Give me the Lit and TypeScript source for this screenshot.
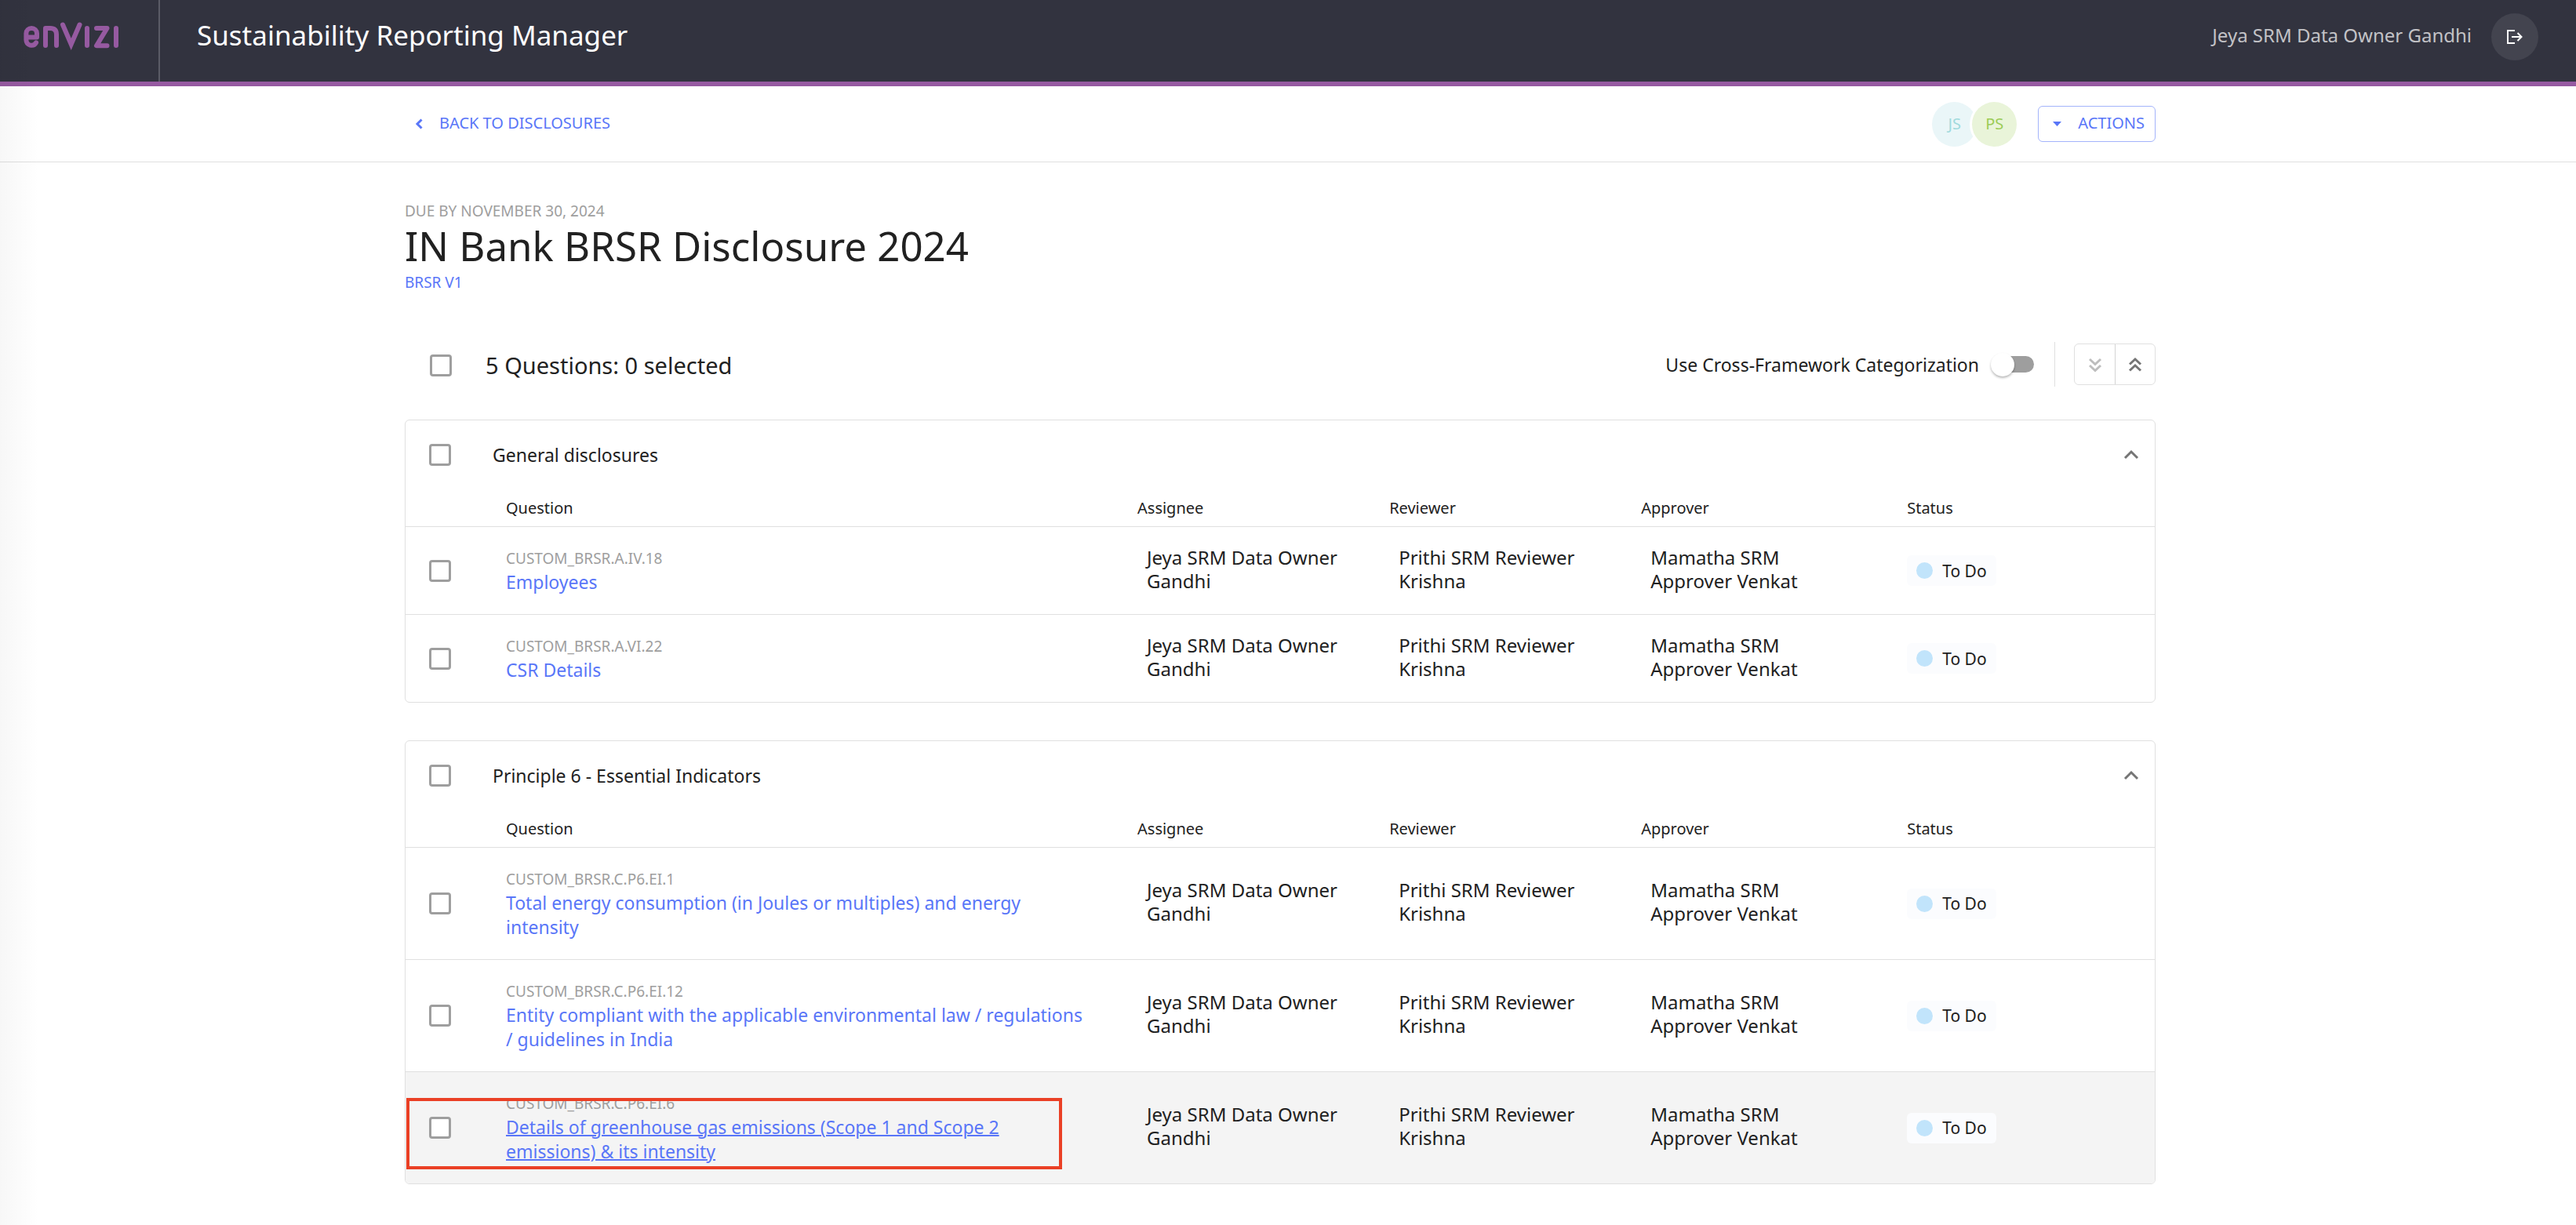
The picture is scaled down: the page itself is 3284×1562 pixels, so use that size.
import { LitElement, html, css, nothing } from "lit";
import { customElement, property } from "lit/decorators.js";

interface Question {
  code: string;
  title: string;
  active?: boolean;
}

interface Section {
  title: string;
  questions: Question[];
}

const SECTIONS: Section[] = [
  {
    title: "General disclosures",
    questions: [
      { code: "CUSTOM_BRSR.A.IV.18", title: "Employees" },
      { code: "CUSTOM_BRSR.A.VI.22", title: "CSR Details" },
    ],
  },
  {
    title: "Principle 6 - Essential Indicators",
    questions: [
      {
        code: "CUSTOM_BRSR.C.P6.EI.1",
        title: "Total energy consumption (in Joules or multiples) and energy intensity",
      },
      {
        code: "CUSTOM_BRSR.C.P6.EI.12",
        title: "Entity compliant with the applicable environmental law / regulations / guidelines in India",
      },
      {
        code: "CUSTOM_BRSR.C.P6.EI.6",
        title: "Details of greenhouse gas emissions (Scope 1 and Scope 2 emissions) & its intensity",
        active: true,
      },
    ],
  },
];

const shared = css`
  *,
  *::before,
  *::after {
    box-sizing: border-box;
  }
  button {
    font: inherit;
    color: inherit;
    margin: 0;
    padding: 0;
    border: 0;
    background: none;
    cursor: pointer;
  }
  a {
    color: #5976f8;
    text-decoration: none;
  }
  svg {
    display: block;
    fill: none;
    stroke: currentColor;
  }
  .check {
    appearance: none;
    display: block;
    flex: none;
    width: 28px;
    height: 28px;
    margin: 0;
    border: 3px solid #9e9e9e;
    border-radius: 4px;
    background: #fff;
  }
  .check:checked {
    background: #5976f8;
  }
`;

@customElement("question-section")
export class QuestionSection extends LitElement {
  @property({ attribute: false }) section!: Section;

  static styles = [
    shared,
    css`
      :host {
        display: block;
        border: 1px solid #e0e0e0;
        border-radius: 6px;
        overflow: hidden;
        background: #fff;
      }
      .head {
        display: flex;
        align-items: center;
        gap: 53px;
        height: 88px;
        padding: 0 18px 0 30px;
      }
      h2 {
        flex: 1;
        margin: 0;
        font-size: 23px;
        line-height: 30px;
        font-weight: 400;
      }
      .toggle {
        color: #757575;
      }
      table {
        width: 100%;
        table-layout: fixed;
        border-collapse: separate;
        border-spacing: 0;
      }
      .c-check {
        width: 128px;
      }
      .c-question {
        width: 36.1%;
      }
      .c-person {
        width: 14.4%;
      }
      .c-approver {
        width: 15.2%;
      }
      th {
        height: 48px;
        padding: 0;
        border-bottom: 1px solid #e0e0e0;
        font-size: 20px;
        line-height: 26px;
        font-weight: 400;
        text-align: left;
      }
      td {
        padding: 0;
        border-bottom: 1px solid #e0e0e0;
        vertical-align: middle;
      }
      tr:last-child td {
        border-bottom: 0;
      }
      .active td {
        background: #f4f4f4;
      }
      .active a {
        text-decoration: underline;
        text-decoration-thickness: 2px;
      }
      .pick {
        padding-left: 30px;
      }
      .question {
        position: relative;
        padding: 25px 60px 25px 0;
      }
      .code {
        display: block;
        color: #9e9e9e;
        font-size: 19px;
        line-height: 30px;
      }
      .question a {
        display: block;
        font-size: 23px;
        line-height: 31px;
      }
      .person {
        padding: 0 56px 4px 12px;
        font-size: 24px;
        line-height: 30px;
      }
      .status {
        display: inline-flex;
        align-items: center;
        gap: 12px;
        height: 39px;
        padding: 0 12px;
        border-radius: 6px;
        background: #fbfcfe;
        font-size: 21px;
        line-height: 26px;
        vertical-align: middle;
      }
      .dot {
        width: 21px;
        height: 21px;
        border-radius: 50%;
        background: #c1e4fb;
      }
      .marker {
        position: absolute;
        left: -127px;
        top: 33px;
        width: 836px;
        height: 91px;
        border: 4px solid #ea4025;
        pointer-events: none;
      }
    `,
  ];

  render() {
    const { title, questions } = this.section;
    return html`
      <div class="head">
        <input class="check" type="checkbox" aria-label="Select all in ${title}" />
        <h2>${title}</h2>
        <button class="toggle" aria-label="Collapse ${title}">
          <svg width="24" height="24" viewBox="0 0 24 24" stroke-width="3"><path d="M4 16l8-8 8 8" /></svg>
        </button>
      </div>
      <table>
        <colgroup>
          <col class="c-check" />
          <col class="c-question" />
          <col class="c-person" />
          <col class="c-person" />
          <col class="c-approver" />
          <col />
        </colgroup>
        <thead>
          <tr>
            <th></th>
            <th>Question</th>
            <th>Assignee</th>
            <th>Reviewer</th>
            <th>Approver</th>
            <th>Status</th>
          </tr>
        </thead>
        <tbody>
          ${questions.map(
            (q) => html`
              <tr class=${q.active ? "active" : ""}>
                <td class="pick"><input class="check" type="checkbox" aria-label="Select ${q.code}" /></td>
                <td class="question">
                  <span class="code">${q.code}</span>
                  <a href="#">${q.title}</a>
                  ${q.active ? html`<div class="marker"></div>` : nothing}
                </td>
                <td class="person">Jeya SRM Data Owner Gandhi</td>
                <td class="person">Prithi SRM Reviewer Krishna</td>
                <td class="person">Mamatha SRM Approver Venkat</td>
                <td><span class="status"><span class="dot"></span>To Do</span></td>
              </tr>
            `,
          )}
        </tbody>
      </table>
    `;
  }
}

@customElement("app-root")
export class AppRoot extends LitElement {
  static styles = [
    shared,
    css`
      :host {
        display: block;
        position: relative;
        min-height: 100vh;
        background: #fff;
        color: #212121;
        font-family: "Noto Sans", "Open Sans", sans-serif;
        font-size: 24px;
      }
      .edge {
        position: absolute;
        inset: 0 auto 0 0;
        width: 50px;
        background: linear-gradient(to right, rgba(0, 0, 0, 0.03), transparent);
        pointer-events: none;
      }
      header {
        display: flex;
        align-items: stretch;
        height: 110px;
        border-bottom: 6px solid #965aa1;
        background: #32333f;
        color: #fff;
      }
      .brand {
        width: 204px;
        border-right: 2px solid #5a5b66;
        color: #965aa1;
      }
      .bar {
        flex: 1;
        display: flex;
        align-items: center;
        gap: 25px;
        padding: 0 48px 10px 47px;
      }
      .app {
        flex: 1;
        padding-bottom: 4px;
        font-size: 35px;
        line-height: 48px;
      }
      .user {
        padding-bottom: 4px;
        color: #c2c2c6;
        line-height: 30px;
      }
      .logout {
        display: grid;
        place-items: center;
        width: 60px;
        height: 60px;
        border-radius: 50%;
        background: #43444f;
      }
      .tools {
        height: 97px;
        padding-right: 20px;
        border-bottom: 1px solid #e0e0e0;
      }
      .wrap {
        max-width: 2232px;
        margin: 0 auto;
      }
      .row {
        display: flex;
        align-items: center;
      }
      .tools .row {
        height: 96px;
        font-size: 20px;
        line-height: 26px;
        color: #5976f8;
      }
      .back {
        display: flex;
        align-items: center;
        gap: 20px;
        margin-right: auto;
        padding-left: 12px;
      }
      .lift {
        padding-bottom: 2px;
      }
      .avatar {
        display: grid;
        place-items: center;
        width: 57px;
        height: 57px;
        border-radius: 50%;
        box-shadow: 0 0 0 3px #fff;
      }
      .js {
        background: #eaf6f8;
        color: #a0dadd;
      }
      .ps {
        margin-left: -6px;
        background: #e9f4d9;
        color: #9ccc58;
      }
      .actions {
        display: flex;
        align-items: center;
        gap: 21px;
        height: 46px;
        margin-left: 27px;
        padding: 0 13px 0 18px;
        border: 1px solid #a4b4fb;
        border-radius: 6px;
      }
      .actions svg {
        fill: currentColor;
        stroke: none;
      }
      main {
        padding: 49px 20px 48px 0;
      }
      .due {
        margin: 0;
        color: #9e9e9e;
        font-size: 19px;
        line-height: 26px;
      }
      h1 {
        margin: 0;
        font-size: 51px;
        line-height: 62px;
        font-weight: 400;
      }
      .version {
        display: block;
        font-size: 19px;
        line-height: 32px;
      }
      .summary {
        height: 57px;
        margin: 60px 0 42px;
        padding-left: 32px;
      }
      .count {
        display: flex;
        align-items: center;
        gap: 43px;
        margin-right: auto;
        padding-top: 3px;
        font-size: 29px;
        line-height: 40px;
      }
      .cross {
        display: flex;
        align-items: center;
        gap: 15px;
        font-size: 23px;
        line-height: 30px;
      }
      .switch {
        appearance: none;
        display: grid;
        align-items: center;
        width: 55px;
        height: 30px;
        margin: 0;
      }
      .switch::before,
      .switch::after {
        content: "";
        grid-area: 1 / 1;
      }
      .switch::before {
        height: 21px;
        margin-left: 3px;
        border-radius: 11px;
        background: #9e9e9e;
      }
      .switch::after {
        width: 30px;
        height: 30px;
        border-radius: 50%;
        background: #fff;
        box-shadow: 0 2px 3px rgba(0, 0, 0, 0.28);
      }
      .switch:checked::after {
        margin-left: auto;
      }
      .rule {
        align-self: stretch;
        width: 1px;
        margin: 0 24px 0 26px;
        background: #e0e0e0;
      }
      .group {
        display: flex;
        height: 53px;
        border: 1px solid #e0e0e0;
        border-radius: 6px;
      }
      .group button {
        display: grid;
        place-items: center;
        width: 51px;
        color: #757575;
      }
      .group button + button {
        border-left: 1px solid #d4d4d4;
      }
      .group button:disabled {
        color: #bdbdbd;
      }
      .sections {
        display: grid;
        gap: 48px;
      }
    `,
  ];

  render() {
    return html`
      <header>
        <svg class="brand" height="104" viewBox="0 0 202 104" role="img" aria-label="Envizi" stroke-width="6" stroke-linecap="round" stroke-linejoin="round">
          <path d="M33.500 47.500H47V42.500a6.800 6.500 0 0 0-13.600 0V51a6.800 7 0 0 0 12.600 3.400" />
          <path d="M58 58V36h6q8 0 8 8V58" />
          <path stroke-linejoin="miter" d="M80 31.500L90.700 56.500L101.500 31.500" />
          <path d="M111 36V58" />
          <path d="M123 36H136.500L123 58.300H136.500" />
          <path d="M148 36V58" />
        </svg>
        <div class="bar">
          <div class="app">Sustainability Reporting Manager</div>
          <div class="user">Jeya SRM Data Owner Gandhi</div>
          <button class="logout" aria-label="Log out">
            <svg width="24" height="24" viewBox="0 0 24 24" stroke-width="2"><path d="M12 4H3V20H12M8 12H20M15.500 7L20.500 12L15.500 17" /></svg>
          </button>
        </div>
      </header>
      <div class="tools">
        <div class="wrap row">
          <a class="back" href="#">
            <svg width="12" height="16" viewBox="0 0 12 16" stroke-width="3"><path d="M9.500 2.500L4 8l5.500 5.500" /></svg>
            <span class="lift">BACK TO DISCLOSURES</span>
          </a>
          <span class="avatar js">JS</span>
          <span class="avatar ps">PS</span>
          <button class="actions">
            <svg width="11" height="6" viewBox="0 0 11 6"><path d="M0 0h11L5.500 6z" /></svg>
            <span class="lift">ACTIONS</span>
          </button>
        </div>
      </div>
      <main>
        <div class="wrap">
          <p class="due">DUE BY NOVEMBER 30, 2024</p>
          <h1>IN Bank BRSR Disclosure 2024</h1>
          <a class="version" href="#">BRSR V1</a>
          <div class="summary row">
            <label class="count"><input class="check" type="checkbox" />5 Questions: 0 selected</label>
            <label class="cross">Use Cross-Framework Categorization<input class="switch" type="checkbox" role="switch" /></label>
            <span class="rule"></span>
            <div class="group">
              <button disabled aria-label="Expand all">
                <svg width="24" height="24" viewBox="0 0 24 24" stroke-width="3"><path d="M5 5l7 6.500L19 5M5 13l7 6.500L19 13" /></svg>
              </button>
              <button aria-label="Collapse all">
                <svg width="24" height="24" viewBox="0 0 24 24" stroke-width="3"><path d="M5 11.500L12 5l7 6.500M5 19.500L12 13l7 6.500" /></svg>
              </button>
            </div>
          </div>
          <div class="sections">
            ${SECTIONS.map((s) => html`<question-section .section=${s}></question-section>`)}
          </div>
        </div>
      </main>
      <div class="edge"></div>
    `;
  }
}
